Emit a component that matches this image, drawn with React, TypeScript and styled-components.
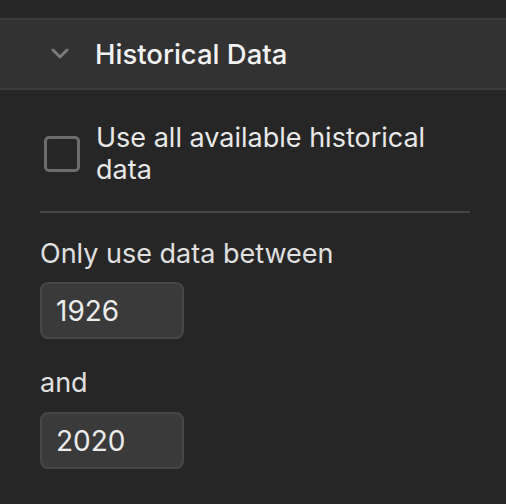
import React from "react";
import styled, { createGlobalStyle } from "styled-components";

const Global = createGlobalStyle`
  html, body { margin: 0; padding: 0; background: #262626; }
  body { font-family: Inter, "Noto Sans", sans-serif; color: #e6e6e6; -webkit-font-smoothing: antialiased; }
`;

const Page = styled.div`
  width: 506px;
  height: 504px;
  padding-top: 18px;
  box-sizing: border-box;
  background: #262626;
  overflow: hidden;
`;

const Header = styled.div`
  display: flex;
  align-items: center;
  height: 72px;
  box-sizing: border-box;
  background: #323232;
  border-top: 2px solid #3c3c3c;
  border-bottom: 2px solid #3c3c3c;
  padding-left: 50px;
  gap: 25px;
`;

const Title = styled.span`
  font-size: 27.5px;
  font-weight: 500;
  color: #f2f2f2;
`;

const Body = styled.div`
  padding: 32px 36px 0 40px;
  display: flex;
  flex-direction: column;
`;

const CheckRow = styled.label`
  display: flex;
  align-items: flex-start;
  gap: 16px;
  padding-left: 4px;
`;

const Box = styled.span`
  flex: none;
  width: 36px;
  height: 36px;
  box-sizing: border-box;
  border: 3px solid #6c6c6c;
  border-radius: 5px;
  margin-top: 14px;
`;

const CheckLabel = styled.span`
  font-size: 27px;
  line-height: 32px;
  color: #e8e8e8;
`;

const Divider = styled.hr`
  border: none;
  height: 2px;
  background: #474747;
  margin: 25px 0 0 0;
  width: 430px;
`;

const Label = styled.div<{ $mt: number }>`
  font-size: 27px;
  line-height: 32px;
  color: #e0e0e0;
  margin-top: ${(p) => p.$mt}px;
`;

const Field = styled.div<{ $mt: number }>`
  width: 144px;
  height: 57px;
  box-sizing: border-box;
  background: #3a3a3a;
  border: 2px solid #474747;
  border-radius: 8px;
  display: flex;
  align-items: center;
  padding-left: 14px;
  font-size: 28px;
  color: #ececec;
  margin-top: ${(p) => p.$mt}px;
`;

export default function App() {
  return (
    <Page>
      <Global />
      <Header>
        <svg width="20" height="12" viewBox="0 0 20 12">
          <path d="M3 2 L10 9 L17 2" fill="none" stroke="#7a7a7a" strokeWidth="3" strokeLinecap="round" strokeLinejoin="round" />
        </svg>
        <Title>Historical Data</Title>
      </Header>
      <Body>
        <CheckRow>
          <Box />
          <CheckLabel>Use all available historical data</CheckLabel>
        </CheckRow>
        <Divider />
        <Label $mt={25}>Only use data between</Label>
        <Field $mt={12}>1926</Field>
        <Label $mt={28}>and</Label>
        <Field $mt={13}>2020</Field>
      </Body>
    </Page>
  );
}
